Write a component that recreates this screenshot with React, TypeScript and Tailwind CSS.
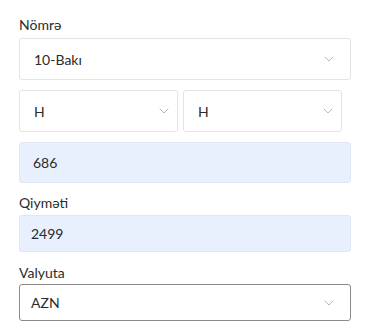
import React from 'react';

const font = { fontFamily: 'Lato, "Open Sans", sans-serif' };

const Chevron = () => (
  <svg width="10" height="6" viewBox="0 0 10 6" fill="none" className="shrink-0">
    <path d="M1 1l4 4 4-4" stroke="#b8b8b8" strokeWidth="1" strokeLinecap="round" strokeLinejoin="round" />
  </svg>
);

const Select = ({ value, className }: { value: string; className: string }) => (
  <div className={`flex items-center justify-between bg-white ${className}`}>
    <span className="text-[14px] text-[#2b2b2b]">{value}</span>
    <Chevron />
  </div>
);

export default function App() {
  return (
    <div className="w-[370px] h-[327px] bg-white overflow-hidden" style={font}>
      <div className="pl-[19px] pt-[16px] w-[351px]">
        <div className="text-[14px] text-[#2b2b2b] leading-[18px] mb-[4px]">Nömrə</div>
        <Select
          value="10-Bakı"
          className="h-[42px] border border-[#e4e4e4] rounded-[3px] pl-[14px] pr-[16px]"
        />
        <div className="flex gap-[5px] mt-[10px] w-[323px]">
          <Select
            value="H"
            className="w-[159px] h-[42px] border border-[#e4e4e4] rounded-[3px] pl-[14px] pr-[8px]"
          />
          <Select
            value="H"
            className="w-[159px] h-[42px] border border-[#e4e4e4] rounded-[3px] pl-[14px] pr-[8px]"
          />
        </div>
        <div className="mt-[10px] h-[41px] bg-[#e8f0fe] border border-[#e1e7f2] rounded-[3px] flex items-center pl-[13px] text-[14px] text-[#2b2b2b]">
          686
        </div>
        <div className="mt-[11px] text-[14px] text-[#2b2b2b] leading-[18px] mb-[3px]">Qiymәti</div>
        <div className="h-[37px] bg-[#e8f0fe] border border-[#e1e7f2] rounded-[3px] flex items-center pl-[11px] text-[14px] text-[#2b2b2b]">
          2499
        </div>
        <div className="mt-[12px] text-[14px] text-[#2b2b2b] leading-[18px] mb-[2px]">Valyuta</div>
        <Select
          value="AZN"
          className="h-[37px] border border-[#8a8a8a] rounded-[3px] pl-[11px] pr-[16px]"
        />
      </div>
    </div>
  );
}
